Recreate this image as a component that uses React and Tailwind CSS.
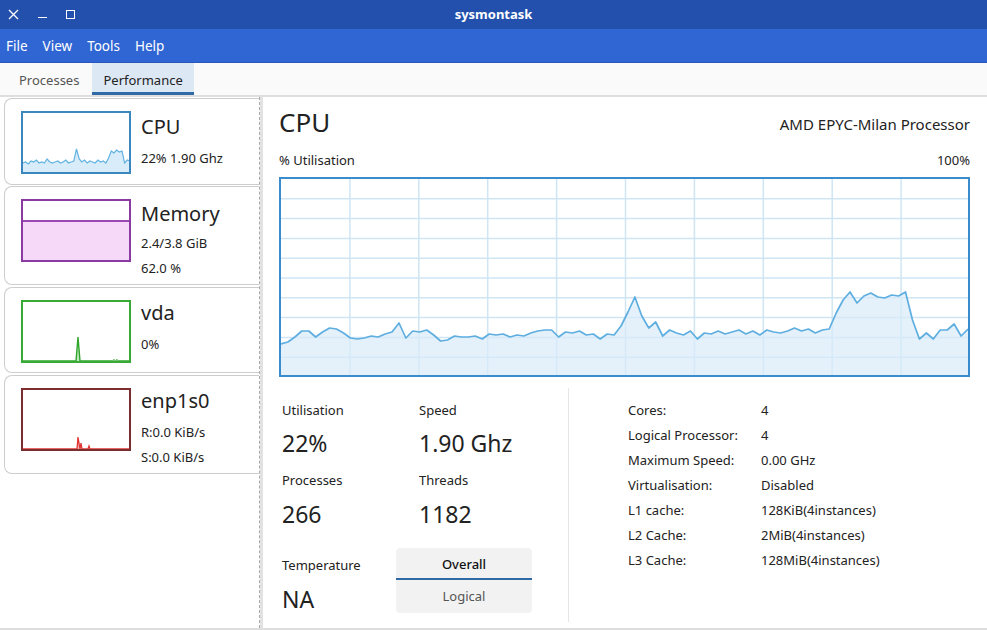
import React from 'react';

// absolute page y values sampled every 7px from x=279
const cpuHistory = [
    344, 342, 337, 331, 331, 337, 332, 328, 329, 333, 338, 339, 338, 336, 337, 334, 332, 323, 338, 331,
    332, 330, 335, 341, 340, 336, 337, 337, 336, 339, 334, 335, 334, 337, 335, 336, 333, 331, 330, 330,
    337, 332, 333, 331, 335, 334, 339, 334, 335, 326, 312, 297, 316, 328, 322, 336, 330, 333, 335, 331,
    339, 333, 334, 331, 334, 332, 330, 334, 331, 335, 330, 332, 333, 331, 328, 331, 329, 333, 330, 329,
    313, 300, 292, 303, 296, 293, 297, 298, 295, 296, 292, 320, 339, 333, 339, 330, 330, 324, 336, 329,
];

const miniCpu = [
    50, 49, 51, 48, 49, 47, 50, 49, 50, 46, 49, 50, 49, 48, 50, 49, 47, 50, 49, 48, 36,
    46, 49, 47, 50, 48, 49, 50, 47, 49, 48, 50, 45, 38, 40, 37, 39, 38, 50, 47, 48,
];

const stats = [
    ['Cores:', '4'],
    ['Logical Processor:', '4'],
    ['Maximum Speed:', '0.00 GHz'],
    ['Virtualisation:', 'Disabled'],
    ['L1 cache:', '128KiB(4instances)'],
    ['L2 Cache:', '2MiB(4instances)'],
    ['L3 Cache:', '128MiB(4instances)'],
];

const MainGraph = () => {
    const w = 687;
    const h = 196;
    const step = w / (cpuHistory.length - 1);
    const pts = cpuHistory.map((y, i) => `${(i * step).toFixed(1)},${y - 179}`).join(' ');
    return (
        <div className="h-[200px] border-2 border-[#3b8ccc] bg-white">
            <svg width={w} height={h} className="block">
                {[1, 2, 3, 4, 5, 6, 7, 8, 9].map((i) => (
                    <line key={'v' + i} x1={i * 68.9} y1="0" x2={i * 68.9} y2={h} stroke="#cfe5f4" strokeWidth="1.5" />
                ))}
                {[1, 2, 3, 4, 5, 6, 7, 8, 9].map((i) => (
                    <line key={'h' + i} x1="0" y1={i * 19.8} x2={w} y2={i * 19.8} stroke="#cfe5f4" strokeWidth="1.5" />
                ))}
                <polygon points={`0,${h} ${pts} ${w},${h}`} fill="#d8ebf9" fillOpacity="0.7" />
                <polyline points={pts} fill="none" stroke="#5eaee0" strokeWidth="1.7" strokeLinejoin="round" />
            </svg>
        </div>
    );
};

const MiniCpu = () => {
    const step = 107 / (miniCpu.length - 1);
    const pts = miniCpu.map((y, i) => `${(i * step).toFixed(1)},${y}`).join(' ');
    return (
        <div className="w-[110px] h-[63px] border-2 border-[#3b87bf] bg-white shrink-0">
            <svg width="106" height="59" className="block">
                <polygon points={`0,59 ${pts} 107,59`} fill="#d9ecf9" />
                <polyline points={pts} fill="none" stroke="#62b2e2" strokeWidth="1.2" />
            </svg>
        </div>
    );
};

const MiniMemory = () => (
    <div className="w-[110px] h-[63px] border-2 border-[#8b3aa4] bg-white shrink-0 flex flex-col">
        <div className="h-[21px] border-b-2 border-[#9a48b2]" />
        <div className="flex-1 bg-[#f6d9f9]" />
    </div>
);

const MiniDisk = () => (
    <div className="w-[110px] h-[63px] border-2 border-[#3aa936] bg-white shrink-0">
        <svg width="106" height="59" className="block">
            <polyline points="0,59 53,59 55,35 57,59 106,59" fill="#bfe8bb" stroke="#2fa52b" strokeWidth="1.4" />
            <polyline points="90,59 91,57 92,59 94,57 95,59" fill="none" stroke="#7cc878" strokeWidth="1" />
        </svg>
    </div>
);

const MiniNet = () => (
    <div className="w-[110px] h-[63px] border-2 border-[#7c2d2d] bg-white shrink-0">
        <svg width="106" height="59" className="block">
            <polyline points="0,59 54,59 55,47 57,59 58,53 59,59 65,59 66,56 67,59 106,59" fill="#f4b5b5" stroke="#e03535" strokeWidth="1.3" />
        </svg>
    </div>
);

const SideCard = ({ graph, title, lines, height, titleGap, lineGap }) => (
    <div className={`flex ${height} ml-1 pl-4 pt-3 border border-r-0 border-[#cdcdcd] rounded-l-lg bg-white`}>
        {graph}
        <div className="ml-[10px] text-[#222]">
            <div className={`text-[20px] leading-[28px] ${titleGap}`}>{title}</div>
            {lines.map((l, i) => (
                <div key={i} className={`text-[13px] leading-[25px] ${i === 0 ? lineGap : ''}`}>{l}</div>
            ))}
        </div>
    </div>
);

const App = () => {
    return (
        <div className="w-[987px] h-[630px] flex flex-col bg-white overflow-hidden" style={{ fontFamily: '"Noto Sans", "Open Sans", sans-serif' }}>
            {/* title bar */}
            <div className="h-[29px] bg-[#2350ad] flex items-center relative text-white shrink-0">
                <div className="flex items-center pl-[8px] gap-[19px]">
                    <svg width="11" height="11" viewBox="0 0 11 11" className="block">
                        <path d="M1 1 L10 10 M10 1 L1 10" stroke="white" strokeWidth="1.3" />
                    </svg>
                    <span className="w-[9px] h-[1.5px] bg-white mt-[6px]" />
                    <span className="w-[9px] h-[9px] border-[1.5px] border-white" />
                </div>
                <div className="absolute inset-x-0 text-center text-[13px] font-bold">sysmontask</div>
            </div>
            {/* menu bar */}
            <div className="h-[34px] bg-[#3066d3] border-b border-[#2a57b8] flex items-center gap-[15px] px-[6px] pt-[1px] text-[13.5px] text-white shrink-0">
                <span>File</span>
                <span>View</span>
                <span>Tools</span>
                <span>Help</span>
            </div>
            {/* tabs */}
            <div className="h-[34px] bg-[#fafafa] flex items-stretch pl-[6px] border-b-2 border-[#dedede] shrink-0 text-[13px]">
                <div className="px-[13px] flex items-center text-[#555] pt-[3px]">Processes</div>
                <div className="px-[11px] flex items-center text-[#222] bg-[#dde8f5] border-b-[3px] border-[#2f6aa6] pt-[6px]">Performance</div>
            </div>
            {/* body */}
            <div className="flex-1 flex border-b-2 border-[#dedede] min-h-0">
                <div className="w-[260px] border-r border-dashed border-[#a9a9a9] flex flex-col gap-[1px] pt-[1px] shrink-0">
                    <SideCard graph={<MiniCpu />} title="CPU" lines={['22% 1.90 Ghz']} height="h-[87px]" titleGap="mt-[2px]" lineGap="mt-[5px]" />
                    <SideCard graph={<MiniMemory />} title="Memory" lines={['2.4/3.8 GiB', '62.0 %']} height="h-[99px]" titleGap="mt-[1px]" lineGap="mt-[3px]" />
                    <SideCard graph={<MiniDisk />} title="vda" lines={['0%']} height="h-[86px] mt-[1px]" titleGap="mt-[-1px]" lineGap="mt-[5px]" />
                    <SideCard graph={<MiniNet />} title="enp1s0" lines={['R:0.0 KiB/s', 'S:0.0 KiB/s']} height="h-[99px] mt-[1px]" titleGap="mt-[-1px]" lineGap="mt-[5px]" />
                </div>
                <div className="w-[3px] bg-[#e2e2e2] shrink-0" />
                <div className="flex-1 pl-[16px] pr-[17px] text-[#222]">
                    <div className="flex items-end justify-between pt-[8px]">
                        <div className="text-[26px] leading-[34px]">CPU</div>
                        <div className="text-[15px] leading-[22px] mb-[4px]">AMD EPYC-Milan Processor</div>
                    </div>
                    <div className="flex justify-between text-[13px] leading-[20px] mt-[11px] mb-[7px]">
                        <span>% Utilisation</span>
                        <span>100%</span>
                    </div>
                    <MainGraph />
                    <div className="flex mt-[11px]">
                        <div className="w-[290px] h-[234px] border-r border-[#e6e6e6] pl-[3px] pt-[12px] text-[13px]">
                            <div className="flex">
                                <div className="w-[137px]">
                                    <div className="leading-[20px]">Utilisation</div>
                                    <div className="text-[23px] leading-[30px] mt-[8px]">22%</div>
                                </div>
                                <div>
                                    <div className="leading-[20px]">Speed</div>
                                    <div className="text-[23px] leading-[30px] mt-[8px]">1.90 Ghz</div>
                                </div>
                            </div>
                            <div className="flex mt-[12px]">
                                <div className="w-[137px]">
                                    <div className="leading-[20px]">Processes</div>
                                    <div className="text-[23px] leading-[30px] mt-[9px]">266</div>
                                </div>
                                <div>
                                    <div className="leading-[20px]">Threads</div>
                                    <div className="text-[23px] leading-[30px] mt-[9px]">1182</div>
                                </div>
                            </div>
                            <div className="flex mt-[19px]">
                                <div className="w-[114px] pt-[7px]">
                                    <div className="leading-[20px]">Temperature</div>
                                    <div className="text-[23px] leading-[30px] mt-[9px]">NA</div>
                                </div>
                                <div className="w-[136px] h-[65px] bg-[#f2f2f2] rounded-[4px] flex flex-col">
                                    <div className="h-[32px] flex items-center justify-center border-b-2 border-[#2f6aa6] text-[#111] font-medium pt-[3px]">Overall</div>
                                    <div className="flex-1 flex items-center justify-center text-[#555] pt-[1px]">Logical</div>
                                </div>
                            </div>
                        </div>
                        <div className="pl-[59px] pt-[10px] text-[13px] text-[#222]">
                            {stats.map(([k, v]) => (
                                <div key={k} className="flex leading-[25px]">
                                    <span className="w-[133px]">{k}</span>
                                    <span>{v}</span>
                                </div>
                            ))}
                        </div>
                    </div>
                </div>
            </div>
        </div>
    );
};

export default App;
